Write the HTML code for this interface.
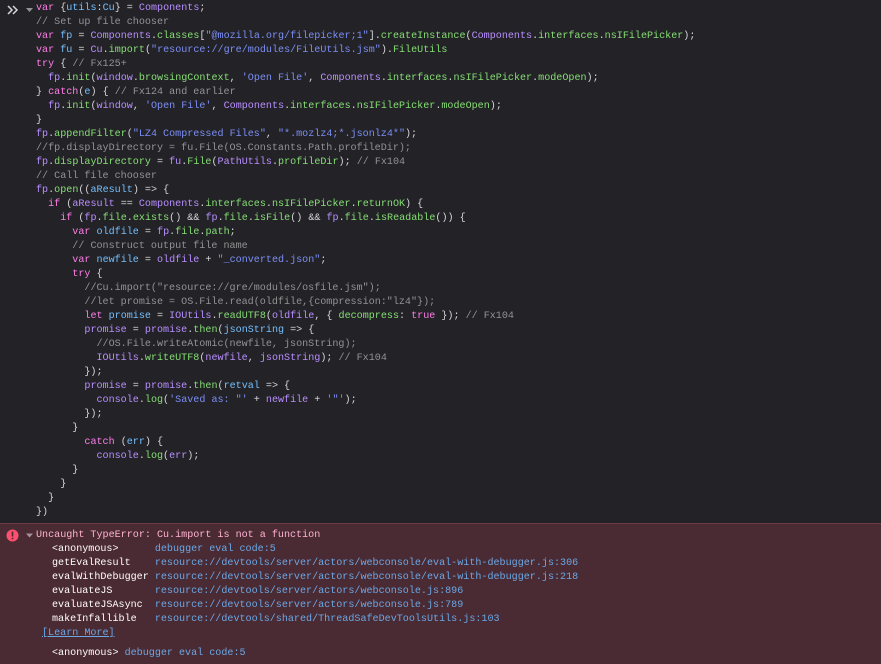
<!DOCTYPE html>
<html><head><meta charset="utf-8"><style>
html,body{margin:0;padding:0;background:#232327;width:881px;height:663px;overflow:hidden}
pre{margin:0;font-family:"Liberation Mono",monospace;font-size:10.08px;line-height:14px;color:#d7d7db;white-space:pre}
.code{position:absolute;left:36px;top:2px}
.k{color:#ff7de9}.v{color:#75bfff}.g{color:#b98eff}.p{color:#86de74}.s{color:#7b8ef5}.c{color:#939395}.o{color:#b1b1b3}
.err{position:absolute;left:0;top:523px;width:881px;height:140px;background:#4a2a33;border-top:1px solid #6b3a44}
.et{position:absolute;left:36px;top:5px;color:#ffb3d2}
.st{position:absolute;left:52px;top:19px;color:#fff}
.l{color:#6aa8e6}.n{color:#a8a8b0}
.lm{position:absolute;left:42px;top:103px;color:#6aa8e6;text-decoration:underline}
.an{position:absolute;left:52px;top:123px;color:#fff}
</style></head><body>
<svg style="position:absolute;left:6px;top:4px" width="30" height="12"><path d="M2 2l4 4-4 4M7 2l4 4-4 4" stroke="#d7d7db" stroke-width="1.5" fill="none"/><path d="M20 4h7l-3.5 4z" fill="#939395"/></svg>
<pre class="code"><span class="k">var</span> {<span class="v">utils</span>:<span class="v">Cu</span>} = <span class="g">Components</span>;
<span class="c">// Set up file chooser</span>
<span class="k">var</span> <span class="v">fp</span> = <span class="g">Components</span>.<span class="p">classes</span>[<span class="s">"@mozilla.org/filepicker;1"</span>].<span class="p">createInstance</span>(<span class="g">Components</span>.<span class="p">interfaces</span>.<span class="p">nsIFilePicker</span>);
<span class="k">var</span> <span class="v">fu</span> = <span class="g">Cu</span>.<span class="p">import</span>(<span class="s">"resource://gre/modules/FileUtils.jsm"</span>).<span class="p">FileUtils</span>
<span class="k">try</span> { <span class="c">// Fx125+</span>
  <span class="g">fp</span>.<span class="p">init</span>(<span class="g">window</span>.<span class="p">browsingContext</span>, <span class="s">'Open File'</span>, <span class="g">Components</span>.<span class="p">interfaces</span>.<span class="p">nsIFilePicker</span>.<span class="p">modeOpen</span>);
} <span class="k">catch</span>(<span class="v">e</span>) { <span class="c">// Fx124 and earlier</span>
  <span class="g">fp</span>.<span class="p">init</span>(<span class="g">window</span>, <span class="s">'Open File'</span>, <span class="g">Components</span>.<span class="p">interfaces</span>.<span class="p">nsIFilePicker</span>.<span class="p">modeOpen</span>);
}
<span class="g">fp</span>.<span class="p">appendFilter</span>(<span class="s">"LZ4 Compressed Files"</span>, <span class="s">"*.mozlz4;*.jsonlz4*"</span>);
<span class="c">//fp.displayDirectory = fu.File(OS.Constants.Path.profileDir);</span>
<span class="g">fp</span>.<span class="p">displayDirectory</span> = <span class="g">fu</span>.<span class="p">File</span>(<span class="g">PathUtils</span>.<span class="p">profileDir</span>); <span class="c">// Fx104</span>
<span class="c">// Call file chooser</span>
<span class="g">fp</span>.<span class="p">open</span>((<span class="v">aResult</span>) =&gt; {
  <span class="k">if</span> (<span class="g">aResult</span> == <span class="g">Components</span>.<span class="p">interfaces</span>.<span class="p">nsIFilePicker</span>.<span class="p">returnOK</span>) {
    <span class="k">if</span> (<span class="g">fp</span>.<span class="p">file</span>.<span class="p">exists</span>() &amp;&amp; <span class="g">fp</span>.<span class="p">file</span>.<span class="p">isFile</span>() &amp;&amp; <span class="g">fp</span>.<span class="p">file</span>.<span class="p">isReadable</span>()) {
      <span class="k">var</span> <span class="v">oldfile</span> = <span class="g">fp</span>.<span class="p">file</span>.<span class="p">path</span>;
      <span class="c">// Construct output file name</span>
      <span class="k">var</span> <span class="v">newfile</span> = <span class="g">oldfile</span> + <span class="s">"_converted.json"</span>;
      <span class="k">try</span> {
        <span class="c">//Cu.import("resource://gre/modules/osfile.jsm");</span>
        <span class="c">//let promise = OS.File.read(oldfile,{compression:"lz4"});</span>
        <span class="k">let</span> <span class="v">promise</span> = <span class="g">IOUtils</span>.<span class="p">readUTF8</span>(<span class="g">oldfile</span>, { <span class="p">decompress</span>: <span class="k">true</span> }); <span class="c">// Fx104</span>
        <span class="g">promise</span> = <span class="g">promise</span>.<span class="p">then</span>(<span class="v">jsonString</span> =&gt; {
          <span class="c">//OS.File.writeAtomic(newfile, jsonString);</span>
          <span class="g">IOUtils</span>.<span class="p">writeUTF8</span>(<span class="g">newfile</span>, <span class="g">jsonString</span>); <span class="c">// Fx104</span>
        });
        <span class="g">promise</span> = <span class="g">promise</span>.<span class="p">then</span>(<span class="v">retval</span> =&gt; {
          <span class="g">console</span>.<span class="p">log</span>(<span class="s">'Saved as: "'</span> + <span class="g">newfile</span> + <span class="s">'"'</span>);
        });
      }
        <span class="k">catch</span> (<span class="v">err</span>) {
          <span class="g">console</span>.<span class="p">log</span>(<span class="g">err</span>);
      }
    }
  }
})</pre>
<div class="err">
<svg style="position:absolute;left:6px;top:5px" width="30" height="14"><circle cx="6.5" cy="6.5" r="6" fill="#ff4f6e"/><rect x="5.7" y="2.5" width="1.6" height="5" fill="#4a2a33"/><rect x="5.7" y="8.7" width="1.6" height="1.6" fill="#4a2a33"/><path d="M20 4.5h7l-3.5 4z" fill="#a89098"/></svg>
<pre class="et">Uncaught TypeError: Cu.import is not a function</pre>
<pre class="st">&lt;anonymous&gt;      <span class="l">debugger eval code:5</span>
getEvalResult    <span class="l">resource://devtools/server/actors/webconsole/eval-with-debugger.js:306</span>
evalWithDebugger <span class="l">resource://devtools/server/actors/webconsole/eval-with-debugger.js:218</span>
evaluateJS       <span class="l">resource://devtools/server/actors/webconsole.js:896</span>
evaluateJSAsync  <span class="l">resource://devtools/server/actors/webconsole.js:789</span>
makeInfallible   <span class="l">resource://devtools/shared/ThreadSafeDevToolsUtils.js:103</span></pre>
<pre class="lm">[Learn More]</pre>
<pre class="an">&lt;anonymous&gt; <span class="l">debugger eval code:5</span></pre>
</div>
</body></html>
